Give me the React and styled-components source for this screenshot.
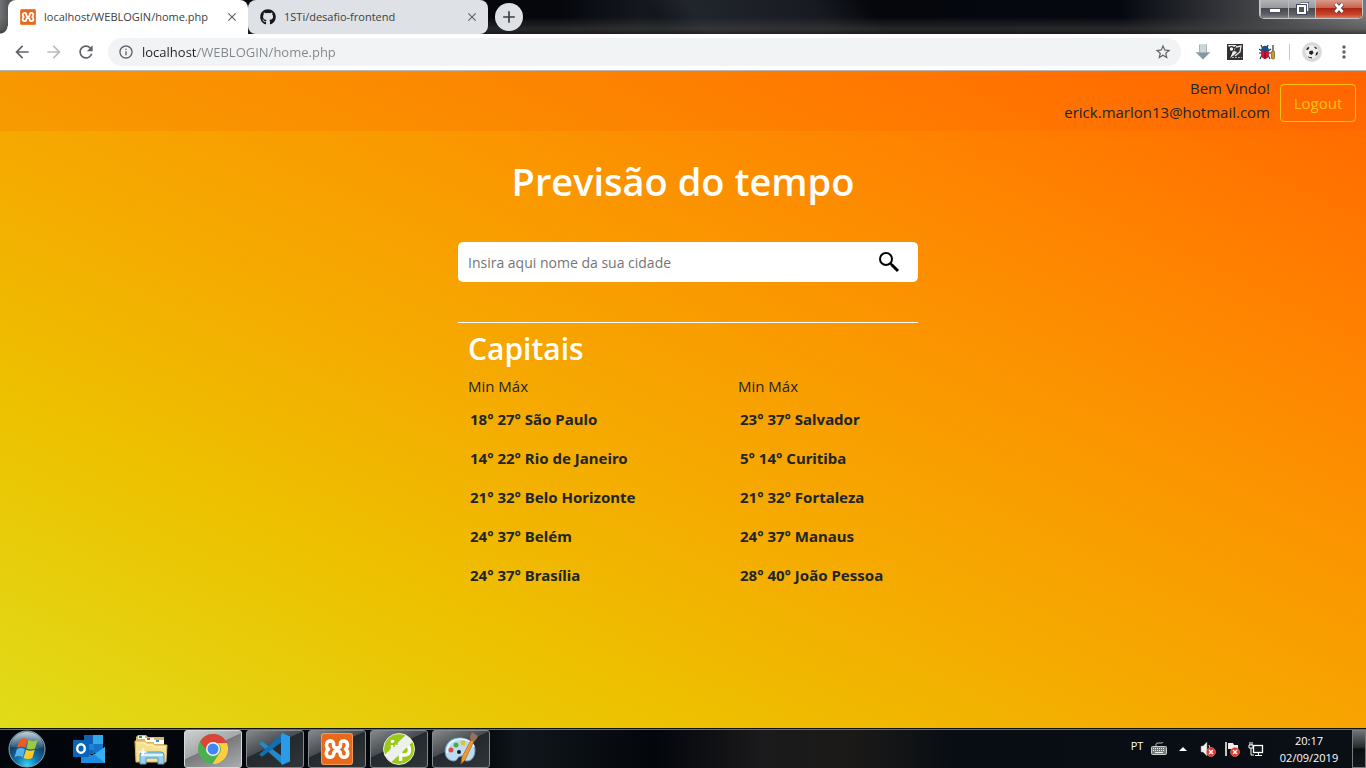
import React from "react";
import styled, { createGlobalStyle } from "styled-components";
import {
  MdArrowBack, MdArrowForward, MdRefresh, MdInfoOutline, MdStarBorder,
  MdMoreVert, MdAdd, MdClose,
} from "react-icons/md";
import { FaGithub } from "react-icons/fa";

const GlobalStyle = createGlobalStyle`
  *, *::before, *::after { box-sizing: border-box; }
  body { margin: 0; font-family: "Open Sans", "Noto Sans", sans-serif; color: #212529; }
  button, input { font-family: inherit; }
  button { cursor: pointer; }
  svg { display: block; flex: none; }
`;

const Screen = styled.div`
  min-height: 100vh;
  display: flex;
  flex-direction: column;
`;

/* ---------- browser ---------- */

const TitleBar = styled.header`
  display: flex;
  align-items: flex-start;
  height: 34px;
  padding-left: 8px;
  background:
    linear-gradient(180deg, transparent 50%, rgba(70, 70, 68, 0.5) 85%, rgba(40, 32, 34, 0.7) 100%),
    linear-gradient(60deg, transparent 48%, rgba(50, 55, 62, 0.5) 51%, rgba(50, 55, 62, 0.4) 60%, transparent 64%),
    linear-gradient(90deg, #707274 0, #55585a 8px, #05070d 248px, #05070d 560px, #14181e 640px, #05070d 820px, #05080f 1120px, #3a3c40 1240px, #77797b 100%);
`;

const Tabs = styled.nav`
  display: flex;
  height: 34px;
`;

const Tab = styled.div`
  position: relative;
  display: flex;
  align-items: center;
  width: 240px;
  height: 34px;
  padding: 0 8px 0 12px;
  color: #3c4043;
  font-size: 11px;
  line-height: 16px;
  background: ${(p) => (p.$active ? "#fff" : "#dee1e6")};
  border-radius: ${(p) => (p.$active ? "8px 8px 0 0" : "8px")};
  &::before {
    content: "";
    display: ${(p) => (p.$active ? "block" : "none")};
    position: absolute;
    left: -8px;
    bottom: 0;
    width: 8px;
    height: 8px;
    background: radial-gradient(circle at 0 0, transparent 7px, #fff 8px);
  }
`;

const TabTitle = styled.a`
  flex: 1;
  margin-left: 8px;
  color: inherit;
  text-decoration: none;
  white-space: nowrap;
`;

const IconButton = styled.button`
  display: flex;
  align-items: center;
  justify-content: center;
  width: ${(p) => p.$size || 32}px;
  height: ${(p) => p.$height || p.$size || 32}px;
  padding: 0;
  border: 0;
  border-radius: 50%;
  background: ${(p) => p.$bg || "transparent"};
  color: ${(p) => p.$color || "#5f6368"};
`;

const NewTab = styled(IconButton)`
  margin: 3px 0 0 7px;
`;

const WindowControls = styled.div`
  display: flex;
  margin: 0 3px 0 auto;
  height: 19px;
  border: 1px solid #c5c7c9;
  border-top: 0;
  border-radius: 0 0 5px 5px;
  box-shadow: inset 0 0 0 1px #22242a;
  overflow: hidden;
`;

const WindowButton = styled.button`
  display: flex;
  align-items: center;
  justify-content: center;
  width: ${(p) => p.$width}px;
  padding: 0 0 2px;
  border: 0;
  border-left: 1px solid ${(p) => (p.$close ? "#d9b0a6" : "#b7b9bb")};
  background: ${(p) =>
    p.$close
      ? "linear-gradient(180deg, #d99a8a 0, #c9604a 45%, #ad2410 46%, #c8432c 80%, #e0795c 100%)"
      : "linear-gradient(180deg, #b3b4b6 0, #96989b 45%, #47494d 46%, #5d5f63 80%, #85878a 100%)"};
`;

const Toolbar = styled.div`
  display: flex;
  align-items: center;
  height: 37px;
  padding: 0 6px;
  background: #fff;
  border-bottom: 1px solid #b4b8bd;
`;

const AddressBar = styled.form`
  display: flex;
  align-items: center;
  flex: 1;
  height: 28px;
  margin: 0 6px;
  padding: 0 10px;
  border-radius: 14px;
  background: #f1f3f4;
  color: #5f6368;
`;

const AddressInput = styled.input`
  flex: 1;
  height: 28px;
  margin-left: 8px;
  padding: 0;
  border: 0;
  outline: 0;
  font-size: 13px;
  color: transparent;
  background: linear-gradient(90deg, #202124 55px, #80868b 55px);
  -webkit-background-clip: text;
  background-clip: text;
`;

const Separator = styled.span`
  width: 1px;
  height: 16px;
  margin: 0 6px;
  background: #c4c7ca;
`;

/* ---------- page ---------- */

const Page = styled.div`
  flex: 1;
  background: linear-gradient(to top right, #e0dc19 0%, #edc100 25%, #f5ab00 43%, #fa9900 60%, #ff8200 79%, #ff6600 100%);
`;

const NavBar = styled.div`
  display: flex;
  align-items: center;
  justify-content: flex-end;
  height: 60px;
  padding-right: 10px;
  background: rgba(255, 90, 0, 0.17);
`;

const Welcome = styled.div`
  margin-right: 10px;
  padding-bottom: 2px;
  font-size: 15px;
  line-height: 24px;
  text-align: right;
`;

const LogoutButton = styled.button`
  width: 76px;
  height: 38px;
  margin-top: 4px;
  padding: 0;
  border: 1px solid #ffc107;
  border-radius: 4px;
  background: transparent;
  color: #ffc107;
  font-size: 15px;
`;

const Title = styled.h1`
  margin: 0;
  padding: 26px 0 37px;
  color: #fff;
  font-size: 38px;
  font-weight: 600;
  line-height: 48px;
  text-align: center;
`;

const Content = styled.main`
  width: 470px;
  max-width: 100%;
  margin: 0 auto;
  padding-left: 10px;
`;

const SearchForm = styled.form`
  display: flex;
  height: 40px;
  padding: 0 11px 0 10px;
  border-radius: 5px;
  background: #fff;
`;

const SearchInput = styled.input`
  flex: 1;
  padding: 0;
  border: 0;
  outline: 0;
  background: transparent;
  font-size: 14px;
  color: #212529;
  &::placeholder { color: #757575; opacity: 1; }
`;

const Capitals = styled.section`
  margin-top: 40px;
  padding: 7px 0 0 10px;
  border-top: 1px solid #fff;
`;

const SectionTitle = styled.h2`
  margin: 0;
  color: #fff;
  font-size: 30px;
  font-weight: 600;
  line-height: 38px;
`;

const Columns = styled.div`
  display: grid;
  grid-template-columns: 270px 1fr;
  padding-top: 6px;
`;

const ColumnLabel = styled.p`
  margin: 0;
  font-size: 15px;
  line-height: 24px;
`;

const CityList = styled.ul`
  margin: 2px 0 0;
  padding: 0 0 0 2px;
  list-style: none;
`;

const City = styled.li`
  font-family: "Noto Sans", sans-serif;
  font-size: 15px;
  font-weight: 700;
  line-height: 39px;
  white-space: nowrap;
`;

/* ---------- taskbar ---------- */

const TaskBar = styled.footer`
  display: flex;
  align-items: center;
  gap: 4px;
  height: 40px;
  border-top: 1px solid #10120c;
  box-shadow: inset 0 1px 0 #6c6d66;
  background: linear-gradient(90deg, #02050a 0, #04080d 35%, #10161b 38%, #03060b 48%, #1b1a1c 56%, #1c1a18 62%, #080d13 70%, #0a0f16 100%);
`;

const StartButton = styled.button`
  display: flex;
  justify-content: center;
  width: 54px;
  margin-right: 2px;
  padding: 0;
  border: 0;
  background: transparent;
`;

const TaskButton = styled.button`
  display: flex;
  align-items: center;
  justify-content: center;
  width: 58px;
  height: 38px;
  padding: 0;
  border: 1px solid ${(p) => (p.$state === "active" ? "#d8d9da" : p.$state === "open" ? "#85898c" : "transparent")};
  border-radius: 3px;
  background: ${(p) =>
    p.$state === "active"
      ? "linear-gradient(155deg, #cfd0d1 0, #a5a7a8 45%, #77797b 46%, #aaacad 100%)"
      : p.$state === "open"
      ? "linear-gradient(155deg, #85898c 0, #464b4f 42%, #24292d 43%, #30353a 100%)"
      : "transparent"};
`;

const Tray = styled.div`
  display: flex;
  align-items: center;
  margin-left: auto;
  height: 39px;
  color: #fff;
`;

const TrayItem = styled.button`
  display: flex;
  align-items: center;
  justify-content: center;
  width: ${(p) => p.$width || 24}px;
  height: 24px;
  padding: 0;
  border: 0;
  background: transparent;
  color: #fff;
  font-size: 11px;
`;

const Language = styled(TrayItem)`
  padding-bottom: 6px;
`;

const Clock = styled.time`
  width: 82px;
  margin-right: 2px;
  font-size: 11px;
  line-height: 17px;
  text-align: center;
`;

const ShowDesktop = styled.button`
  width: 14px;
  height: 38px;
  padding: 0;
  border: 1px solid #777a7c;
  background: linear-gradient(180deg, #6e7173 0, #282c30 45%, #0b0f13 50%, #15191d 100%);
`;

/* ---------- drawings ---------- */

const XamppIcon = ({ size }) => (
  <svg width={size} height={size} viewBox="0 0 32 32" aria-hidden="true">
    <rect width="32" height="32" rx="3" fill="#f39a52" />
    <rect x="1" y="1" width="30" height="30" rx="2.500" fill="#e9691b" />
    <path
      d="M12.500 12C13.500 6.500 5.500 6.500 5.500 12c0 2 .8 3.300 2 4C6 17 5.300 18.500 5.300 20.500c0 5 7.400 5 7.400.3 0-2 1.200-3 3.300-3s3.300 1 3.300 3c0 4.700 7.400 4.700 7.400-.3 0-2-.7-3.500-2.200-4.500 1.200-.7 2-2 2-4 0-5.500-8-5.500-7 0 .3 2-1.300 3-3.500 3s-3.800-1-3.500-3z"
      fill="none" stroke="#fff" strokeWidth="3.600" strokeLinejoin="round"
    />
  </svg>
);

const MinimizeGlyph = () => (
  <svg width="12" height="16" viewBox="0 0 12 16" aria-hidden="true">
    <rect x=".5" y="8.500" width="11" height="4" fill="#fff" stroke="#4a4d5c" />
  </svg>
);

const RestoreGlyph = () => (
  <svg width="13" height="13" viewBox="0 0 13 13" aria-hidden="true">
    <path d="M4.500 1.500h7v7h-2" fill="none" stroke="#454857" strokeWidth="3" />
    <path d="M4.500 1.500h7v7h-2" fill="none" stroke="#fff" strokeWidth="1.500" />
    <rect x="2" y="4" width="7" height="7" fill="#555" stroke="#454857" strokeWidth="4" />
    <rect x="2" y="4" width="7" height="7" fill="#555" stroke="#fff" strokeWidth="2" />
  </svg>
);

const CloseGlyph = () => (
  <svg width="14" height="14" viewBox="0 0 14 14" aria-hidden="true">
    <path d="M3.500 3l7 8M10.500 3l-7 8" stroke="#53404a" strokeWidth="4.500" />
    <path d="M3.500 3l7 8M10.500 3l-7 8" stroke="#fff" strokeWidth="2.700" />
  </svg>
);

const SearchGlyph = () => (
  <svg width="22" height="22" viewBox="0 0 22 22" aria-hidden="true">
    <circle cx="8" cy="8" r="6" fill="none" stroke="#000" strokeWidth="2" />
    <path d="M12.500 12.500l1.500 1.500" stroke="#000" strokeWidth="2" />
    <path d="M13.500 13.500l6.500 6.500" stroke="#000" strokeWidth="3" />
  </svg>
);

const DownloadIcon = () => (
  <svg width="16" height="16" viewBox="0 0 16 16" aria-hidden="true">
    <path d="M4 .5h8V8h3.700L8 15.700.3 8H4z" fill="#a4b4bb" />
    <path d="M5 1h6v7H5z" fill="#c9d6da" />
    <path d="M2 9h12l-6 6z" fill="#83989f" />
  </svg>
);

const SketchIcon = () => (
  <svg width="16" height="16" viewBox="0 0 16 16" aria-hidden="true">
    <rect width="16" height="16" fill="#333" />
    <path d="M1 1h9L7 7l3 1-3 3-4 3 2-5z" fill="#eee" />
    <circle cx="4.500" cy="5" r="2.300" fill="#fff" stroke="#222" strokeWidth="1.200" />
    <path d="M7 4l4-3M2 14l3-6" fill="none" stroke="#222" strokeWidth="1.200" />
    <path d="M9 3l5-1-1 6-5 4" fill="none" stroke="#eee" strokeWidth="1.300" />
    <path d="M5 13.500h10" stroke="#aaa" strokeDasharray="2 1" />
  </svg>
);

const BugIcon = () => (
  <svg width="16" height="16" viewBox="0 0 16 16" aria-hidden="true">
    <path d="M2 1l2 4M9 1L8 4M0 5l3 2M0 9h3M1 15l2-4M12 5L9 7M12 9H9M11 15l-2-4" stroke="#26333e" strokeWidth="1.200" />
    <ellipse cx="6" cy="9" rx="4" ry="6" fill="#d8122c" />
    <path d="M2 7c0-7 8-7 8 0z" fill="#1c4d86" />
    <path d="M6 7v8" stroke="#651425" />
    <path d="M14 1v7" stroke="#333" strokeWidth="1.200" />
    <rect x="12.500" y="7" width="3" height="8" rx="1" fill="#c99b22" stroke="#785c16" strokeWidth=".7" />
  </svg>
);

const BallIcon = () => (
  <svg width="20" height="20" viewBox="0 0 20 20" aria-hidden="true">
    <circle cx="10" cy="10" r="10" fill="#dadada" />
    <circle cx="10" cy="10" r="6.500" fill="#f0f0f0" />
    <path d="M7.500 9l3-.5 1 2.500-2 2-2.500-1.500zM4 7.500l2-2.500 1.500.5L6 8zM12 4.500l2.500 1 .5 1.500-2-.5zM14 11l2-1.500-.5 3-2 1.500zM6 14l1.500 1 2.500.2-.3 1.300-3-.9z" fill="#222" />
  </svg>
);

const StartOrb = () => (
  <svg width="38" height="38" viewBox="0 0 38 38" aria-hidden="true">
    <defs>
      <radialGradient id="orb" cx=".5" cy=".95" r=".85">
        <stop offset="0" stopColor="#32d5f7" />
        <stop offset=".35" stopColor="#1477af" />
        <stop offset=".75" stopColor="#123f64" />
        <stop offset="1" stopColor="#547184" />
      </radialGradient>
      <linearGradient id="gloss" x2="0" y2="1">
        <stop offset="0" stopColor="#d8e6ec" stopOpacity=".8" />
        <stop offset="1" stopColor="#6c9ab2" stopOpacity=".25" />
      </linearGradient>
    </defs>
    <circle cx="19" cy="19" r="18" fill="url(#orb)" stroke="#8ea5b2" />
    <path d="M3 17C3-3 35-3 35 17c-9 4-22 0-32 0z" fill="url(#gloss)" />
    <path d="M11.500 9.500c3-2 5.500-1.500 8 0l-2.200 8.300c-3-1.700-5-1.700-8 0z" fill="#ef5a24" />
    <path d="M20.500 10c3 1.500 6 1.500 9 0l-2.500 8.500c-3 1.400-5.500 1.300-8.500-.1z" fill="#9bca3c" />
    <path d="M8.800 19.200c3-1.800 5.300-1.500 8.200 0l-2.200 8c-3-1.700-5.300-1.700-8.300 0z" fill="#55b2ea" />
    <path d="M18 19.700c3 1.500 5.500 1.500 8.800 0l-2.500 8.300c-3 1.500-5.800 1.400-8.700 0z" fill="#fcc927" />
  </svg>
);

const OutlookIcon = () => (
  <svg width="32" height="30" viewBox="0 0 32 30" aria-hidden="true">
    <path d="M11 1h10v19H11z" fill="#1565b5" />
    <path d="M11 1h10v9H11z" fill="#1260ac" />
    <path d="M20 1h10v9H20z" fill="#32a9e8" />
    <path d="M20 10h10v9H20z" fill="#1473c9" />
    <path d="M11 10h10v6H11z" fill="#1b82d4" />
    <path d="M8 15l12 7 12-9v16H8z" fill="#1b86dc" />
    <path d="M8 29l24-16v16z" fill="#37b0ed" />
    <path d="M8 29l13-9 11 9z" fill="#208bde" />
    <rect y="6" width="16" height="17" rx="1" fill="#0864bb" />
    <ellipse cx="8" cy="14.500" rx="3.800" ry="4.300" fill="none" stroke="#fff" strokeWidth="2.400" />
  </svg>
);

const ExplorerIcon = () => (
  <svg width="34" height="32" viewBox="0 0 34 32" aria-hidden="true">
    <path d="M2 4l2-2h8l2 2h16v24H2z" fill="#dcb65b" />
    <path d="M4 3h7v3H4z" fill="#fff" /><path d="M5 3h3v2H5z" fill="#27a33b" />
    <path d="M11 5h9v4h-9z" fill="#fff" /><path d="M13 5h3v2h-3z" fill="#d84a2c" />
    <path d="M20 7h10v4H20z" fill="#fff" /><path d="M22 7h3v2h-3z" fill="#2b92da" />
    <path d="M1 8h10l2 2h6l2 2h12l-1 17H2z" fill="#f5df91" stroke="#d7b45a" />
    <path d="M3 10h7l2 2h6l2 2h11" fill="none" stroke="#fff4c0" />
    <path d="M6 31v-9q0-3 3-3h18q3 0 3 3v9h-6v-6H12v6z" fill="#9bd0ec" stroke="#5099bf" />
    <path d="M7 22h22" stroke="#def3fc" strokeWidth="2" />
    <path d="M9 14l1 4 4 1-4 1-1 4-1-4-4-1 4-1z" fill="#fff" />
  </svg>
);

const ChromeIcon = () => (
  <svg width="32" height="32" viewBox="0 0 32 32" aria-hidden="true">
    <circle cx="16" cy="16" r="15" fill="#4caf50" />
    <path d="M3 8.500A15 15 0 0 1 29.800 10H16a6 6 0 0 0-5.300 8.800z" fill="#db4437" />
    <path d="M29.800 10A15 15 0 0 1 15.500 31l6-9.500A7 7 0 0 0 20 10z" fill="#ffcd40" />
    <circle cx="16" cy="16" r="7" fill="#f5f5f5" />
    <circle cx="16" cy="16" r="5.500" fill="#4285f4" />
  </svg>
);

const CodeIcon = () => (
  <svg width="32" height="32" viewBox="0 0 32 32" aria-hidden="true">
    <path d="M0 10.500L3 8.300 24 24v8z" fill="#2489ca" />
    <path d="M0 21.500l3 2.200L24 8V0z" fill="#1070b3" />
    <path d="M23 0l8 3.500v25L23 32l-1-2V2z" fill="#2a9be9" />
  </svg>
);

const IReportIcon = () => (
  <svg width="32" height="32" viewBox="0 0 32 32" aria-hidden="true">
    <circle cx="16" cy="16" r="15.500" fill="#9aca16" stroke="#e4ecd4" />
    <path d="M9.500 12v9M9.500 7v3" stroke="#fff" strokeWidth="3.500" />
    <path d="M17.500 28V12h4q5 0 5 5t-5 5h-4" fill="none" stroke="#fff" strokeWidth="3.500" />
    <path d="M1.500 22L23 2l7 6.500L8 29.500z" fill="#edf0ec" />
    <path d="M11 9v5M14 9v3" stroke="#9aca16" strokeWidth="1.500" />
  </svg>
);

const PaintIcon = () => (
  <svg width="34" height="34" viewBox="0 0 34 34" aria-hidden="true">
    <path d="M2 24c-3-8 2-18 13-18 10 0 16 5 16 12 0 6-3 11-8 11-4 0-2-5-6-5-4 0-3 5-7 5-3 0-7-2-8-5z" fill="#bddcf1" stroke="#739fbe" />
    <path d="M3 21C3 12 9 7 17 7c7 0 12 4 13 8" fill="none" stroke="#e9f8ff" strokeWidth="1.500" />
    <circle cx="7" cy="18" r="2.500" fill="#e34b42" />
    <circle cx="12" cy="13" r="2.500" fill="#49aa4a" />
    <circle cx="19" cy="11" r="2.500" fill="#e8bd2d" />
    <circle cx="15" cy="20" r="2" fill="#101e2a" />
    <path d="M27 8l3 1-9 19-4 4 1-7z" fill="#ee9b36" stroke="#b36118" strokeWidth=".7" />
    <path d="M26 7c0-4 1-5 2-7l6 4c-1 3-3 4-4 6z" fill="#95735b" />
  </svg>
);

const KeyboardIcon = () => (
  <svg width="16" height="15" viewBox="0 0 16 15" aria-hidden="true">
    <path d="M5 5V3q0-1 2-1h3q2 0 2-1" fill="none" stroke="#b9bcbf" />
    <rect x=".5" y="5.500" width="15" height="8" rx="1" fill="#777b7e" stroke="#c9cccf" />
    <path d="M2 7.500h12M2 9.500h12" stroke="#eee" strokeDasharray="1 1" />
    <path d="M4 11.500h8" stroke="#eee" />
  </svg>
);

const ErrorBadge = () => (
  <g>
    <circle cx="11" cy="11" r="4.500" fill="#e23428" stroke="#f3a093" strokeWidth=".5" />
    <path d="M9 9l4 4M13 9l-4 4" stroke="#fff" strokeWidth="1.500" />
  </g>
);

const SpeakerIcon = () => (
  <svg width="16" height="16" viewBox="0 0 16 16" aria-hidden="true">
    <path d="M1 5h2l4-4v14l-4-4H1z" fill="#f1f2f3" stroke="#888" strokeWidth=".5" />
    <path d="M9 4q2 3 0 7" fill="none" stroke="#ddd" />
    <ErrorBadge />
  </svg>
);

const FlagIcon = () => (
  <svg width="16" height="16" viewBox="0 0 16 16" aria-hidden="true">
    <path d="M2 1v14" stroke="#fff" strokeWidth="1.500" />
    <path d="M4 2h5l1 2h4v6H9L8 8H4z" fill="#eee" />
    <ErrorBadge />
  </svg>
);

const NetworkIcon = () => (
  <svg width="16" height="16" viewBox="0 0 16 16" aria-hidden="true">
    <rect x="5.500" y="4.500" width="9" height="7" fill="#141a20" stroke="#fff" strokeWidth="1.300" />
    <path d="M7 14.500h7M10.500 12v2M1 4h4v3H1zM2 1v3M4 1v3M3 7v7h3" fill="none" stroke="#fff" />
  </svg>
);

const WEST = ["18° 27° São Paulo", "14° 22° Rio de Janeiro", "21° 32° Belo Horizonte", "24° 37° Belém", "24° 37° Brasília"];
const EAST = ["23° 37° Salvador", "5° 14° Curitiba", "21° 32° Fortaleza", "24° 37° Manaus", "28° 40° João Pessoa"];

const CapitalColumn = ({ cities }) => (
  <div>
    <ColumnLabel>Min Máx</ColumnLabel>
    <CityList>
      {cities.map((city) => <City key={city}>{city}</City>)}
    </CityList>
  </div>
);

const Browser = () => (
  <>
    <TitleBar>
      <Tabs>
        <Tab $active>
          <XamppIcon size={16} />
          <TabTitle href="#home">localhost/WEBLOGIN/home.php</TabTitle>
          <IconButton $size={16} aria-label="Close tab"><MdClose size={14} /></IconButton>
        </Tab>
        <Tab>
          <FaGithub size={16} color="#15181c" />
          <TabTitle href="#desafio">1STi/desafio-frontend</TabTitle>
          <IconButton $size={16} aria-label="Close tab"><MdClose size={14} /></IconButton>
        </Tab>
      </Tabs>
      <NewTab $size={28} $bg="#dee1e6" $color="#3c4043" aria-label="New tab"><MdAdd size={20} /></NewTab>
      <WindowControls>
        <WindowButton $width={28} aria-label="Minimize"><MinimizeGlyph /></WindowButton>
        <WindowButton $width={27} aria-label="Restore"><RestoreGlyph /></WindowButton>
        <WindowButton $width={47} $close aria-label="Close"><CloseGlyph /></WindowButton>
      </WindowControls>
    </TitleBar>
    <Toolbar>
      <IconButton aria-label="Back"><MdArrowBack size={20} /></IconButton>
      <IconButton $color="#babcbe" aria-label="Forward"><MdArrowForward size={20} /></IconButton>
      <IconButton aria-label="Reload"><MdRefresh size={20} /></IconButton>
      <AddressBar onSubmit={(e) => e.preventDefault()}>
        <MdInfoOutline size={16} />
        <AddressInput aria-label="Address" defaultValue="localhost/WEBLOGIN/home.php" />
        <IconButton $size={16} type="button" aria-label="Bookmark"><MdStarBorder size={18} /></IconButton>
      </AddressBar>
      <IconButton aria-label="Downloads"><DownloadIcon /></IconButton>
      <IconButton aria-label="Sketch"><SketchIcon /></IconButton>
      <IconButton aria-label="Debugger"><BugIcon /></IconButton>
      <Separator />
      <IconButton aria-label="Profile"><BallIcon /></IconButton>
      <IconButton aria-label="Menu"><MdMoreVert size={20} /></IconButton>
    </Toolbar>
  </>
);

const Forecast = () => (
  <Page>
    <NavBar>
      <Welcome>
        <div>Bem Vindo!</div>
        <div>erick.marlon13@hotmail.com</div>
      </Welcome>
      <LogoutButton>Logout</LogoutButton>
    </NavBar>
    <Title>Previsão do tempo</Title>
    <Content>
      <SearchForm onSubmit={(e) => e.preventDefault()}>
        <SearchInput aria-label="Cidade" placeholder="Insira aqui nome da sua cidade" />
        <IconButton $size={36} $height={40} aria-label="Buscar"><SearchGlyph /></IconButton>
      </SearchForm>
      <Capitals>
        <SectionTitle>Capitais</SectionTitle>
        <Columns>
          <CapitalColumn cities={WEST} />
          <CapitalColumn cities={EAST} />
        </Columns>
      </Capitals>
    </Content>
  </Page>
);

const Desktop = () => (
  <TaskBar>
    <StartButton aria-label="Start"><StartOrb /></StartButton>
    <TaskButton aria-label="Outlook"><OutlookIcon /></TaskButton>
    <TaskButton aria-label="Explorer"><ExplorerIcon /></TaskButton>
    <TaskButton $state="active" aria-label="Chrome"><ChromeIcon /></TaskButton>
    <TaskButton $state="open" aria-label="Code"><CodeIcon /></TaskButton>
    <TaskButton $state="open" aria-label="XAMPP"><XamppIcon size={32} /></TaskButton>
    <TaskButton $state="open" aria-label="iReport"><IReportIcon /></TaskButton>
    <TaskButton $state="open" aria-label="Paint"><PaintIcon /></TaskButton>
    <Tray>
      <Language $width={22}>PT</Language>
      <TrayItem $width={22} aria-label="Keyboard"><KeyboardIcon /></TrayItem>
      <TrayItem $width={26} aria-label="Hidden icons">
        <svg width="8" height="4" viewBox="0 0 8 4" aria-hidden="true"><path d="M0 4l4-4 4 4z" fill="#fff" /></svg>
      </TrayItem>
      <TrayItem aria-label="Volume"><SpeakerIcon /></TrayItem>
      <TrayItem aria-label="Action center"><FlagIcon /></TrayItem>
      <TrayItem aria-label="Network"><NetworkIcon /></TrayItem>
      <Clock dateTime="2019-09-02T20:17">20:17<br />02/09/2019</Clock>
      <ShowDesktop aria-label="Show desktop" />
    </Tray>
  </TaskBar>
);

export default function App() {
  return (
    <Screen>
      <GlobalStyle />
      <Browser />
      <Forecast />
      <Desktop />
    </Screen>
  );
}
